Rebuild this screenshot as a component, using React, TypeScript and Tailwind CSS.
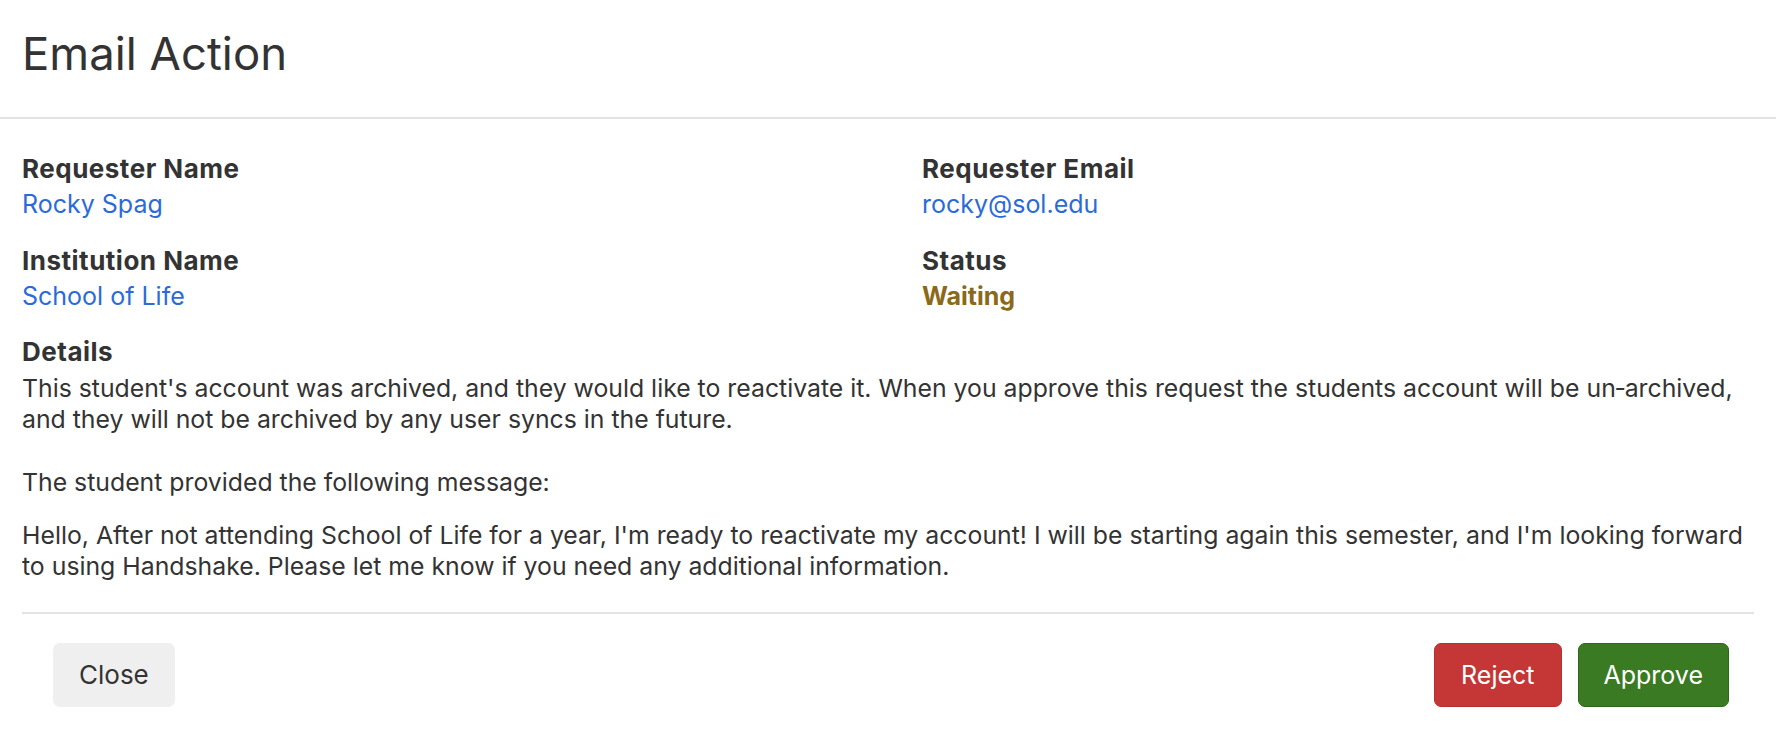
import React from 'react';

const font = { fontFamily: 'Inter, "Noto Sans", sans-serif' };

function Field({ label, value, valueClass }: { label: string; value: string; valueClass: string }) {
  return (
    <div className="flex flex-col gap-[5px]">
      <div className="text-[26px] leading-[30px] font-bold tracking-[0.5px] text-[#333333]">{label}</div>
      <div className={valueClass}>{value}</div>
    </div>
  );
}

export default function App() {
  return (
    <div className="w-full min-h-[756px] bg-white text-[#333333] text-[25px] leading-[30px]" style={font}>
      {/* Header */}
      <div className="h-[119px] px-[22px] pt-[27px] border-b-2 border-[#e3e3e3]">
        <h1 className="text-[45.5px] leading-[54px] font-normal">Email Action</h1>
      </div>

      {/* Body */}
      <div className="px-[22px] pt-[35px]">
        <div className="grid grid-cols-2 gap-x-[68px] gap-y-[27px]">
          <Field label="Requester Name" value="Rocky Spag" valueClass="text-[#2b6bd8]" />
          <Field label="Requester Email" value="rocky@sol.edu" valueClass="text-[#2b6bd8]" />
          <Field label="Institution Name" value="School of Life" valueClass="text-[#2b6bd8]" />
          <Field label="Status" value="Waiting" valueClass="font-bold text-[#8b6918]" />
        </div>

        <div className="mt-[26px] flex flex-col gap-[6px]">
          <div className="text-[26px] leading-[30px] font-bold tracking-[0.5px]">Details</div>
          <div className="text-[24.8px] leading-[31px]">
            <p className="mb-[32px]">
              This student's account was archived, and they would like to reactivate it. When you approve this request the students account will be un&#8209;archived, and they will not be archived by any user syncs in the future.
            </p>
            <p className="mb-[22px]">The student provided the following message:</p>
            <p>
              Hello, After not attending School of Life for a year, I'm ready to reactivate my account! I will be starting again this semester, and I'm looking forward to using Handshake. Please let me know if you need any additional information.
            </p>
          </div>
        </div>

        <div className="mt-[30px] border-t-2 border-[#e3e3e3]" />
      </div>

      {/* Footer */}
      <div className="flex items-center justify-between pl-[53px] pr-[47px] pt-[29px] pb-[48px]">
        <button className="h-[64px] px-[26px] rounded-[7px] bg-[#efefef] text-[26px] text-[#333333]">Close</button>
        <div className="flex gap-[16px]">
          <button className="h-[64px] px-[26px] rounded-[7px] bg-[#c53736] border border-[#b53030] text-[25px] text-white">Reject</button>
          <button className="h-[64px] px-[25px] rounded-[7px] bg-[#3a7a22] border border-[#2e661a] text-[25px] text-white">Approve</button>
        </div>
      </div>
    </div>
  );
}
